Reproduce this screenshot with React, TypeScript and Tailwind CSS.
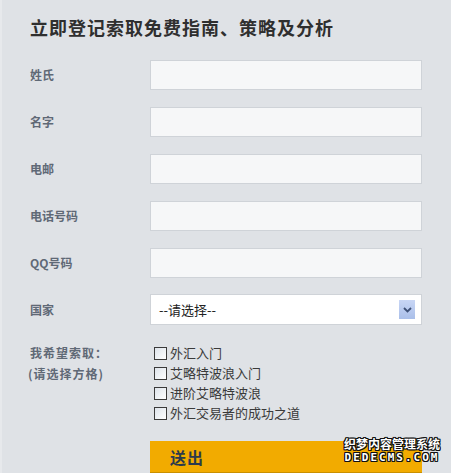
const fields = ["姓氏", "名字", "电邮", "电话号码", "QQ号码"];

const guides = ["外汇入门", "艾略特波浪入门", "进阶艾略特波浪", "外汇交易者的成功之道"];

const labelCls =
	"w-[120px] shrink-0 text-[12px] font-bold text-[#5f6976] [font-family:'Noto_Sans_CJK_SC',sans-serif]";

const Box = () => (
	<span className="mr-[3px] inline-block h-[13px] w-[13px] shrink-0 border border-[#3a3a3a] bg-gradient-to-br from-[#dde3ea] to-white" />
);

export default function App() {
	return (
		<div className="relative h-[473px] w-[451px] overflow-hidden border-l-2 border-[#e7e9ec] bg-[#dfe2e6] pl-[28px] pt-[14px]">
			<h1 className="text-[18px] font-bold leading-[26px] tracking-[1px] text-[#2f2f2f] [font-family:'Noto_Sans_CJK_SC',serif]">
				立即登记索取免费指南、策略及分析
			</h1>

			<div className="mt-[20px] flex flex-col gap-[17px]">
				{fields.map((f) => (
					<div key={f} className="flex items-center">
						<span className={labelCls}>{f}</span>
						<div className="h-[30px] w-[272px] border border-[#cfd3d8] bg-[#f6f7f8]" />
					</div>
				))}
				<div className="-mt-[1px] flex items-center">
					<span className={labelCls}>国家</span>
					<div className="flex h-[31px] w-[272px] items-center justify-between border border-[#cfd3d8] bg-white pl-[8px] pr-[6px]">
						<span className="text-[13px] text-[#222] [font-family:'Noto_Sans_CJK_SC',sans-serif]">
							--请选择--
						</span>
						<span className="flex h-[19px] w-[16px] items-center justify-center bg-gradient-to-b from-[#c8d6f5] to-[#aabfe9]">
							<svg width="9" height="6" viewBox="0 0 9 6">
								<path d="M1 1 L4.5 4.5 L8 1" fill="none" stroke="#3e5177" strokeWidth="1.8" />
							</svg>
						</span>
					</div>
				</div>
			</div>

			<div className="mt-[17px] flex">
				<div className="w-[120px] shrink-0 text-[12px] font-bold leading-[21px] tracking-[1px] text-[#5f6976] [font-family:'Noto_Sans_CJK_SC',sans-serif]">
					<div>我希望索取：</div>
					<div className="-ml-[2px]">(请选择方格)</div>
				</div>
				<div className="flex flex-col pl-[4px] pt-[1px]">
					{guides.map((g) => (
						<label key={g} className="flex h-[20px] items-center text-[13px] text-[#3a3a3a] [font-family:'Noto_Sans_CJK_SC',sans-serif]">
							<Box />
							{g}
						</label>
					))}
				</div>
			</div>

			<div className="ml-[120px] mt-[18px] flex h-[32px] w-[272px] items-center border-b border-[#c98f00] bg-[#f2ab00] pl-[20px]">
				<span className="text-[16px] font-bold tracking-[1px] text-[#2c3a4c] [font-family:'Noto_Sans_CJK_SC',serif]">
					送出
				</span>
			</div>

			<div className="absolute right-[11px] top-[437px] flex flex-col items-center text-white [font-family:'Noto_Sans_CJK_SC',sans-serif] [text-shadow:1px_0_0_#111,-1px_0_0_#111,0_1px_0_#111,0_-1px_0_#111,1px_1px_0_#111,-1px_-1px_0_#111,1px_-1px_0_#111,-1px_1px_0_#111]">
				<span className="text-[12px] font-bold leading-[14px]">织梦内容管理系统</span>
				<span className="text-[11px] font-bold leading-[14px] tracking-[2px] [font-family:'DejaVu_Sans_Mono',monospace]">
					DEDECMS.COM
				</span>
			</div>
		</div>
	);
}
